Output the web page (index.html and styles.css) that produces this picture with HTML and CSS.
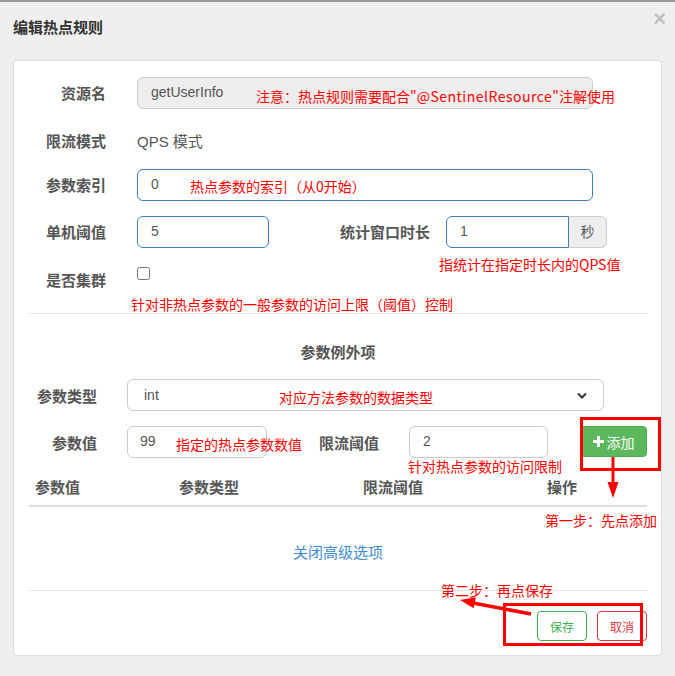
FILE: index.html
```html
<!DOCTYPE html>
<html lang="zh-CN">
<head>
    <meta charset="UTF-8">
    <title>编辑热点规则</title>
    <link rel="stylesheet" href="styles.css">
</head>
<body>
    <div class="top-bar"></div>

    <div class="modal-header">
        <h4 class="modal-title">编辑热点规则</h4>
        <span class="close">×</span>
    </div>

    <div class="rule-card">
        <!-- basic rule -->
        <div class="form-row">
            <label class="form-label">资源名</label>
            <div class="control">
                <div class="form-control readonly wide">getUserInfo</div>
                <span class="note note-resource">注意：热点规则需要配合"<span class="latin">@SentinelResource</span>"注解使用</span>
            </div>
        </div>
        <div class="form-row short">
            <label class="form-label pad-static">限流模式</label>
            <div class="control static">QPS 模式</div>
        </div>
        <div class="form-row">
            <label class="form-label">参数索引</label>
            <div class="control">
                <div class="form-control active wide">0</div>
                <span class="note note-index">热点参数的索引（从0开始）</span>
            </div>
        </div>
        <div class="form-row">
            <label class="form-label">单机阈值</label>
            <div class="control">
                <div class="form-control active small">5</div>
            </div>
            <label class="form-label window-label">统计窗口时长</label>
            <div class="control input-group">
                <div class="form-control active grouped">1</div>
                <span class="addon">秒</span>
                <span class="note note-window">指统计在指定时长内的QPS值</span>
            </div>
        </div>
        <div class="form-row cluster-row">
            <label class="form-label pad-cluster">是否集群</label>
            <div class="control">
                <input type="checkbox" class="check">
            </div>
        </div>
        <div class="note note-line">针对非热点参数的一般参数的访问上限（阈值）控制</div>

        <hr class="divider">

        <!-- param exceptions -->
        <h5 class="section-title">参数例外项</h5>
        <div class="form-row">
            <label class="form-label narrow">参数类型</label>
            <div class="control ctl-narrow">
                <div class="form-control select">
                    <span>int</span>
                    <svg class="chevron" width="10" height="7" viewBox="0 0 10 7"><path d="M1 1.5 L5 5.5 L9 1.5" fill="none" stroke="#333" stroke-width="2"/></svg>
                </div>
                <span class="note note-type">对应方法参数的数据类型</span>
            </div>
        </div>
        <div class="form-row last-row">
            <label class="form-label narrow">参数值</label>
            <div class="control ctl-narrow">
                <div class="form-control value-input">99</div>
                <span class="note note-value">指定的热点参数数值</span>
            </div>
            <label class="form-label limit-label">限流阈值</label>
            <div class="control">
                <div class="form-control limit-input">2</div>
                <span class="note note-limit">针对热点参数的访问限制</span>
            </div>
            <button class="btn-add">
                <svg width="11" height="11" viewBox="0 0 11 11"><path d="M5.5 0 V11 M0 5.5 H11" stroke="#fff" stroke-width="3"/></svg>
                添加
            </button>
        </div>

        <div class="table-wrap">
            <table class="param-table">
                <thead>
                    <tr>
                        <th class="c1">参数值</th>
                        <th class="c2">参数类型</th>
                        <th class="c3">限流阈值</th>
                        <th class="c4">操作</th>
                    </tr>
                </thead>
            </table>
            <span class="note note-step1">第一步：先点添加</span>
        </div>

        <div class="toggle-link">关闭高级选项</div>

        <div class="footer">
            <span class="note note-step2">第二步：再点保存</span>
            <button class="btn btn-save">保存</button>
            <button class="btn btn-cancel">取消</button>
        </div>

        <!-- annotation marks -->
        <svg class="marks" width="650" height="596" viewBox="0 0 650 596">
            <rect x="568.5" y="358.5" width="78" height="51" fill="none" stroke="#f00" stroke-width="3"/>
            <line x1="600" y1="397" x2="600" y2="424" stroke="#f00" stroke-width="3"/>
            <polygon points="600,438 594.5,422 605.5,422" fill="#f00"/>
            <rect x="491.5" y="544.5" width="137" height="40" fill="none" stroke="#f00" stroke-width="3"/>
            <line x1="518" y1="554" x2="460" y2="543" stroke="#f00" stroke-width="3.5"/>
            <polygon points="447,540 462.8,537.2 460.6,548.3" fill="#f00"/>
        </svg>
    </div>
</body>
</html>
```

FILE: styles.css
```css
body {
    margin: 0;
    background: #efefef;
    font-family: "Liberation Sans", "Noto Sans CJK SC", sans-serif;
    color: #555;
}

.top-bar {
    height: 2px;
    background: #999;
}

/* Header */
.modal-header {
    height: 58px;
    display: flex;
    justify-content: space-between;
    align-items: flex-start;
    padding: 0 9px 0 13px;
}

.modal-title {
    margin: 15px 0 0;
    font-size: 15px;
    line-height: 22px;
    font-weight: bold;
    color: #333;
}

.close {
    margin-top: 6px;
    font-size: 22px;
    font-weight: bold;
    line-height: 1;
    color: #000;
    opacity: 0.2;
}

/* Card */
.rule-card {
    position: relative;
    margin: 0 13px 0 13px;
    padding: 16px 14px 14px 15px;
    background: #fff;
    border: 1px solid #ddd;
    border-radius: 4px;
    height: 596px;
    box-sizing: border-box;
}

.form-row {
    display: flex;
    align-items: flex-start;
    margin-bottom: 15px;
}

.form-row.short {
    min-height: 30px;
}

.form-row.last-row {
    margin-bottom: 0;
}

.form-label {
    flex: none;
    width: 92px;
    box-sizing: border-box;
    padding: 7px 15px 0 0;
    text-align: right;
    font-size: 15px;
    line-height: 20px;
    font-weight: bold;
    color: #555;
}

.form-label.pad-static {
    padding-top: 8px;
}

.form-label.pad-cluster {
    padding-top: 8px;
}

.form-label.narrow {
    width: 83px;
    padding-top: 8px;
}

.window-label {
    width: 161px;
    padding-right: 0;
}

.limit-label {
    width: 112px;
    padding-right: 0;
    padding-top: 8px;
}

.control {
    position: relative;
    margin-left: 16px;
}

.ctl-narrow {
    margin-left: 15px;
}

.control.static {
    padding-top: 8px;
    font-size: 15px;
    line-height: 20px;
    color: #555;
}

.form-control {
    box-sizing: border-box;
    height: 32px;
    padding: 0 12px;
    border: 1px solid #ccc;
    border-radius: 6px;
    font-size: 14px;
    line-height: 28px;
    color: #555;
    background: #fff;
}

.form-control.readonly {
    background: #eee;
}

.form-control.active {
    border-color: #3f7cbd;
}

.wide {
    width: 456px;
    padding-left: 13px;
}

.small {
    width: 132px;
    padding-left: 13px;
}

.input-group {
    display: flex;
}

.form-control.grouped {
    width: 123px;
    padding-left: 13px;
    border-radius: 6px 0 0 6px;
}

.addon {
    box-sizing: border-box;
    width: 38px;
    height: 32px;
    border: 1px solid #ccc;
    border-left: none;
    border-radius: 0 6px 6px 0;
    background: #eee;
    text-align: center;
    font-size: 14px;
    line-height: 30px;
    color: #555;
}

.check {
    margin: 4px 0 0;
    width: 13px;
    height: 13px;
}

.cluster-row {
    margin-bottom: 0;
}

/* Red annotations */
.note {
    position: absolute;
    white-space: nowrap;
    font-family: "Noto Sans CJK SC", sans-serif;
    font-size: 14px;
    line-height: 20px;
    color: #f00;
}

.note .latin {
    letter-spacing: 0.5px;
}

.note-resource { left: 119px; top: 9px; }
.note-index { left: 53px; top: 7px; }
.note-window { left: -7px; top: 38px; }
.note-type { left: 152px; top: 8px; }
.note-value { left: 49px; top: 8px; }
.note-limit { left: 13px; top: 30px; }
.note-step1 { right: -10px; top: 39px; }
.note-step2 { left: 412px; top: -11px; }

.note-line {
    position: static;
    margin: 4px 0 0 102px;
    line-height: 18px;
}

.divider {
    margin: 0;
    border: none;
    border-top: 1px solid #e5e5e5;
}

.section-title {
    margin: 29px 0 16px;
    text-align: center;
    font-size: 15px;
    line-height: 20px;
    font-weight: bold;
    color: #555;
}

.select {
    width: 477px;
    padding-left: 16px;
    display: flex;
    justify-content: space-between;
    align-items: center;
}

.chevron {
    margin-right: 4px;
}

.value-input {
    width: 140px;
}

.limit-input {
    width: 139px;
    padding-left: 13px;
    margin-left: 14px;
}

.btn-add {
    margin-left: 32px;
    width: 67px;
    height: 31px;
    border: 1px solid #4cae4c;
    border-radius: 4px;
    background: #5cb85c;
    color: #fff;
    font-family: "Noto Sans CJK SC", sans-serif;
    font-size: 14px;
    display: flex;
    align-items: center;
    justify-content: center;
    gap: 3px;
    padding: 0;
}

/* Table */
.table-wrap {
    position: relative;
    margin-top: 13px;
}

.param-table {
    width: 618px;
    table-layout: fixed;
    border-collapse: collapse;
}

.param-table th {
    box-sizing: border-box;
    padding: 7px 6px;
    text-align: left;
    font-size: 15px;
    line-height: 20px;
    font-weight: bold;
    color: #555;
    border-bottom: 2px solid #ddd;
}

.param-table .c1 { width: 144px; }
.param-table .c2 { width: 184px; }
.param-table .c3 { width: 184px; }

.toggle-link {
    margin-top: 36px;
    text-align: center;
    font-size: 15px;
    line-height: 20px;
    color: #3e8ad0;
}

/* Footer */
.footer {
    position: relative;
    margin-top: 27px;
    padding-top: 20px;
    border-top: 1px solid #e5e5e5;
    display: flex;
    justify-content: flex-end;
    gap: 10px;
}

.btn {
    height: 30px;
    padding: 0 12px;
    border-radius: 4px;
    background: #fff;
    font-family: "Noto Sans CJK SC", sans-serif;
    font-size: 12px;
}

.btn-save {
    border: 1px solid #3fae52;
    color: #3fae52;
}

.btn-cancel {
    border: 1px solid #dc3545;
    color: #dc3545;
}

.marks {
    position: absolute;
    left: -1px;
    top: -1px;
    pointer-events: none;
}
```
